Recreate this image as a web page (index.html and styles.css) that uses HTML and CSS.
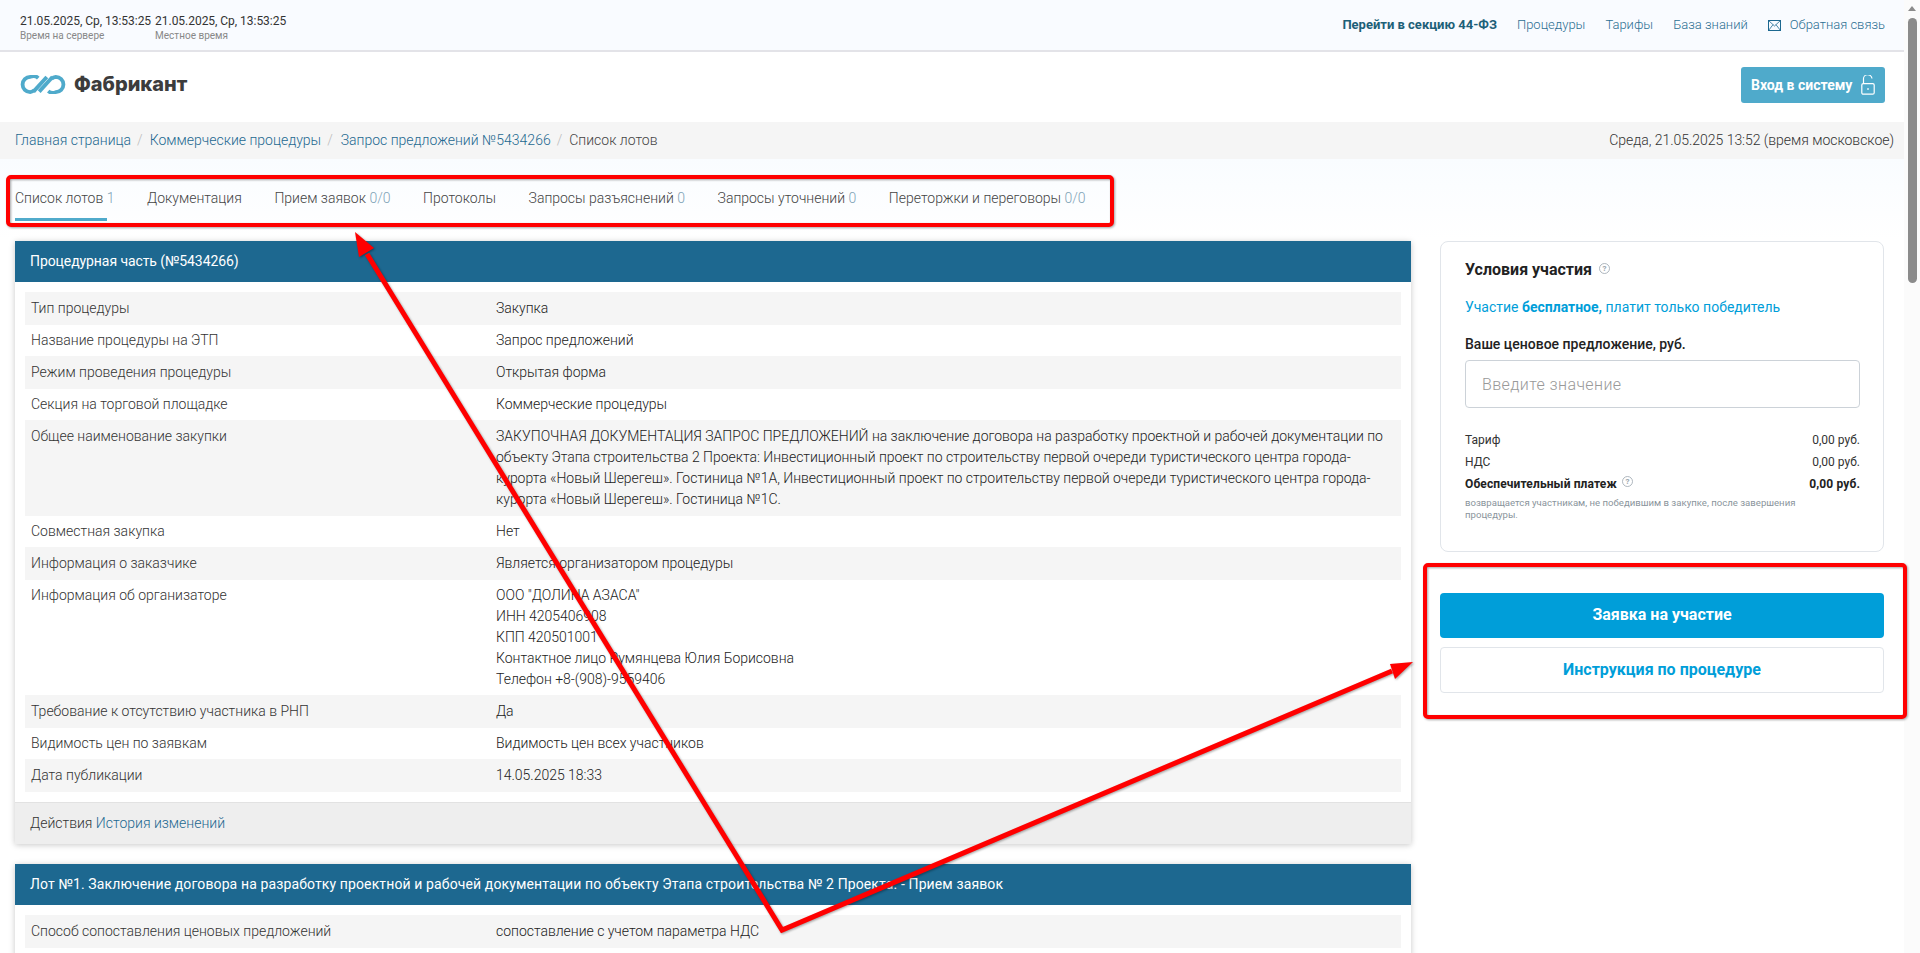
FILE: index.html
```html
<!DOCTYPE html>
<html lang="ru">
<head>
<meta charset="utf-8">
<title>Список лотов</title>
<link rel="stylesheet" href="styles.css">
</head>
<body>
<div class="viewport">
  <div class="page">
    <div class="topbar">
      <div class="clocks">
        <div class="clock"><div class="clock-time">21.05.2025, Ср, 13:53:25</div><div class="clock-label">Время на сервере</div></div>
        <div class="clock"><div class="clock-time">21.05.2025, Ср, 13:53:25</div><div class="clock-label">Местное время</div></div>
      </div>
      <nav class="topnav">
        <a class="topnav-strong">Перейти в секцию 44-ФЗ</a>
        <a>Процедуры</a>
        <a>Тарифы</a>
        <a>База знаний</a>
        <a class="feedback">
          <svg class="mail" width="13" height="11" viewBox="0 0 13 11"><rect x="0.5" y="0.5" width="12" height="10" fill="none" stroke="#1d6890"/><path d="M0.5 0.5 6.5 6 12.5 0.5M0.5 10.5 5 4.7M12.5 10.5 8 4.7" fill="none" stroke="#1d6890" stroke-width="0.8"/></svg>
          Обратная связь
        </a>
      </nav>
    </div>
    <header class="header">
      <div class="logo">
        <svg width="46" height="19" viewBox="0 0 46 20" fill="none" stroke="#4faacb" stroke-width="4">
          <path d="M18 3.2A7.6 7.6 0 0 0 9.5 2 A7.9 7.9 0 1 0 9.5 18 A8 8 0 0 0 14 16"/>
          <path d="M13 17.5 27 2.2"/>
          <path d="M19 17.5 33 2.2"/>
          <path d="M28.5 17A7.6 7.6 0 0 0 36.5 18 A7.9 7.9 0 1 0 36.5 2 A8 8 0 0 0 32 4"/>
        </svg>
        <span class="logo-text">Фабрикант</span>
      </div>
      <a class="login">Вход в систему
        <svg width="14" height="20" viewBox="0 0 14 20" fill="none" stroke="#fff" stroke-width="1.2"><rect x="0.8" y="8.6" width="12.4" height="10.6" rx="1.5"/><path d="M2.5 8.5V4.5A4.2 4.2 0 0 1 11 3.5"/><path d="M7 13v2"/></svg>
      </a>
    </header>
    <div class="crumbs">
      <div class="crumb-list">
        <a>Главная страница</a><span class="sep">/</span>
        <a>Коммерческие процедуры</a><span class="sep sep-wide">/</span>
        <a>Запрос предложений №5434266</a><span class="sep">/</span>
        <span class="crumb-current">Список лотов</span>
      </div>
      <div class="crumb-date">Среда, 21.05.2025 13:52 (время московское)</div>
    </div>
    <div class="tabs">
      <a class="tab active"><span class="tab-name">Список лотов</span> <span class="count">1</span></a>
      <a class="tab"><span class="tab-name">Документация</span></a>
      <a class="tab"><span class="tab-name">Прием заявок</span> <span class="count">0/0</span></a>
      <a class="tab"><span class="tab-name">Протоколы</span></a>
      <a class="tab"><span class="tab-name">Запросы разъяснений</span> <span class="count">0</span></a>
      <a class="tab"><span class="tab-name">Запросы уточнений</span> <span class="count">0</span></a>
      <a class="tab"><span class="tab-name">Переторжки и переговоры</span> <span class="count">0/0</span></a>
    </div>
    <div class="content">
      <div class="left">
        <section class="panel">
          <h2 class="panel-head">Процедурная часть (№5434266)</h2>
          <div class="rows">
            <div class="row"><div class="cell-l">Тип процедуры</div><div class="cell-v">Закупка</div></div>
            <div class="row"><div class="cell-l">Название процедуры на ЭТП</div><div class="cell-v">Запрос предложений</div></div>
            <div class="row"><div class="cell-l">Режим проведения процедуры</div><div class="cell-v">Открытая форма</div></div>
            <div class="row"><div class="cell-l">Секция на торговой площадке</div><div class="cell-v">Коммерческие процедуры</div></div>
            <div class="row"><div class="cell-l">Общее наименование закупки</div><div class="cell-v">ЗАКУПОЧНАЯ ДОКУМЕНТАЦИЯ ЗАПРОС ПРЕДЛОЖЕНИЙ на заключение договора на разработку проектной и рабочей документации по объекту Этапа строительства 2 Проекта: Инвестиционный проект по строительству первой очереди туристического центра города-курорта «Новый Шерегеш». Гостиница №1А, Инвестиционный проект по строительству первой очереди туристического центра города-курорта «Новый Шерегеш». Гостиница №1С.</div></div>
            <div class="row"><div class="cell-l">Совместная закупка</div><div class="cell-v">Нет</div></div>
            <div class="row"><div class="cell-l">Информация о заказчике</div><div class="cell-v">Является организатором процедуры</div></div>
            <div class="row"><div class="cell-l">Информация об организаторе</div><div class="cell-v">ООО "ДОЛИНА АЗАСА"<br>ИНН 4205406908<br>КПП 420501001<br>Контактное лицо Румянцева Юлия Борисовна<br>Телефон +8-(908)-9559406</div></div>
            <div class="row"><div class="cell-l">Требование к отсутствию участника в РНП</div><div class="cell-v">Да</div></div>
            <div class="row"><div class="cell-l">Видимость цен по заявкам</div><div class="cell-v">Видимость цен всех участников</div></div>
            <div class="row"><div class="cell-l">Дата публикации</div><div class="cell-v">14.05.2025 18:33</div></div>
          </div>
          <div class="panel-foot">Действия <a>История изменений</a></div>
        </section>
        <section class="panel">
          <h2 class="panel-head panel-head-lot">Лот №1. Заключение договора на разработку проектной и рабочей документации по объекту Этапа строительства № 2 Проекта. - Прием заявок</h2>
          <div class="rows">
            <div class="row"><div class="cell-l">Способ сопоставления ценовых предложений</div><div class="cell-v">сопоставление с учетом параметра НДС</div></div>
          </div>
        </section>
      </div>
      <aside class="right">
        <div class="card">
          <div class="card-title">Условия участия
            <svg class="help" width="11" height="11" viewBox="0 0 11 11"><circle cx="5.5" cy="5.5" r="5" fill="none" stroke="#9aa5ad" stroke-width="0.8"/><text x="5.5" y="8.2" text-anchor="middle" class="help-mark">?</text></svg>
          </div>
          <div class="free">Участие <b>бесплатное,</b> платит только победитель</div>
          <div class="offer-label">Ваше ценовое предложение, руб.</div>
          <div class="input">Введите значение</div>
          <div class="fee"><span>Тариф</span><span>0,00 руб.</span></div>
          <div class="fee"><span>НДС</span><span>0,00 руб.</span></div>
          <div class="fee fee-bold"><span>Обеспечительный платеж
            <svg class="help" width="11" height="11" viewBox="0 0 11 11"><circle cx="5.5" cy="5.5" r="5" fill="none" stroke="#9aa5ad" stroke-width="0.8"/><text x="5.5" y="8.2" text-anchor="middle" class="help-mark">?</text></svg>
          </span><span>0,00 руб.</span></div>
          <div class="note">возвращается участникам, не победившим в закупке, после завершения процедуры.</div>
        </div>
        <a class="btn btn-primary">Заявка на участие</a>
        <a class="btn btn-outline">Инструкция по процедуре</a>
      </aside>
    </div>
  </div>
  <div class="scrollbar"><span class="scroll-up"></span><span class="scroll-thumb"></span></div>
  <svg class="marks" width="1920" height="953" viewBox="0 0 1920 953" fill="none">
    <g class="mark-group">
      <rect x="8" y="177" width="1104" height="48" rx="3" stroke="#ff0000" stroke-width="4"/>
      <rect x="1425" y="565" width="480" height="152" rx="3" stroke="#ff0000" stroke-width="4"/>
      <path d="M367 254 782 930 1392 671" stroke="#ff0000" stroke-width="5" stroke-linejoin="miter"/>
      <path d="M355 232 374 248 359 257Z" fill="#ff0000"/>
      <path d="M1413 662 1390 664 1395 679Z" fill="#ff0000"/>
    </g>
  </svg>
</div>
</body>
</html>
```

FILE: styles.css
```css
* { box-sizing: border-box; }
html, body { margin: 0; padding: 0; height: 953px; overflow: hidden; }
body { font-family: Roboto, "Liberation Sans", sans-serif; font-size: 14px; line-height: 21px; color: #333; background: #fff; }
a { color: inherit; text-decoration: none; }

.viewport { position: relative; display: flex; width: 1920px; height: 953px; overflow: hidden; }
.page { width: 1904px; flex: none; background: linear-gradient(#f9fcff 159px, #fff 240px); }

.topbar { height: 52px; display: flex; justify-content: space-between; padding: 14px 19px 0 20px; background: #f9fbff; border-bottom: 2px solid #e3e3e8; }
.clocks { display: flex; gap: 4px; }
.clock-time { font-size: 12px; line-height: 14px; color: #333; letter-spacing: -0.03px; }
.clock-label { font-size: 10px; line-height: 14px; margin-top: 1px; color: #888; }
.topnav { display: flex; align-items: flex-start; gap: 20px; font-size: 13px; line-height: 20px; color: #2c6f92; font-weight: 300; padding-top: 1px; }
.topnav-strong { font-weight: 700; color: #1d6078; }
.feedback { display: flex; align-items: center; gap: 9px; height: 20px; }

.header { height: 70px; display: flex; justify-content: space-between; align-items: center; padding: 0 19px 0 20px; background: #fff; }
.logo { display: flex; align-items: center; gap: 8px; margin-top: -6px; }
.logo-text { font-family: Inter, Roboto, sans-serif; font-weight: 800; font-size: 20px; line-height: 24px; color: #3c3c3c; }
.login { width: 144px; height: 36px; margin-top: -4px; display: flex; align-items: center; justify-content: space-between; padding: 0 10px; border-radius: 3px; background: #4faacb; color: #fff; font-size: 14px; font-weight: 700; }

.crumbs { height: 37px; display: flex; justify-content: space-between; align-items: center; padding: 0 10px 0 15px; background: #f5f5f5; }
.crumb-list { display: flex; color: #1d6890; font-weight: 300; }
.sep { color: #bbb; padding: 0 7px 0 6px; }
.sep-wide { padding-right: 8px; }
.crumb-current { color: #444; }
.crumb-date { color: #333; font-weight: 300; letter-spacing: -0.03px; }

.tabs { height: 82px; display: flex; gap: 32.6px; padding: 0 0 0 15px; }
.tab { position: relative; height: 62px; padding-top: 29px; line-height: 20px; color: #444; font-weight: 300; }
.count { color: #7fa3b7; }
.tab.active .tab-name { display: inline-block; height: 33px; padding-right: 4px; border-bottom: 3px solid #4faacb; }
.tab.active .count { margin-left: -4px; }

.content { display: flex; padding: 0 20px 0 15px; }
.left { width: 1396px; flex: none; }
.right { width: 444px; flex: none; margin-left: 29px; }

.panel { background: #fff; box-shadow: 0 1px 6px rgba(0,0,0,.22); margin-bottom: 20px; }
.panel-head { margin: 0; height: 41px; padding: 0 15px; font-size: 14px; font-weight: 400; line-height: 41px; color: #fff; background: #1d6890; white-space: nowrap; letter-spacing: -0.08px; }
.panel-head-lot { letter-spacing: 0.12px; }
.rows { padding: 10px; }
.row { display: grid; grid-template-columns: 465px 1fr; padding: 5px 5px; font-weight: 300; color: #222; }
.row:nth-child(odd) { background: #f5f5f5; padding: 6px 5px; }
.cell-l { padding-left: 1px; color: #333; }
.cell-v { padding-left: 1px; letter-spacing: -0.02px; }
.panel-foot { height: 42px; padding: 0 15px; line-height: 41px; background: #eee; border-top: 1px solid #e2e2e2; font-weight: 300; }
.panel-foot a { color: #1d6890; }

.card { height: 311px; padding: 18px 23px 0 24px; border: 1px solid #e1e5ea; border-radius: 8px; background: #fff; }
.card-title { font-size: 16px; line-height: 20px; font-weight: 700; color: #222; }
.help { margin-left: 3px; vertical-align: 1px; }
.help-mark { font-size: 8px; fill: #9aa5ad; }
.free { margin-top: 17px; color: #009ed9; line-height: 21px; }
.offer-label { margin-top: 16px; font-weight: 500; color: #222; line-height: 21px; }
.input { height: 48px; margin-top: 5px; padding: 0 16px; border: 1px solid #ccd2d8; border-radius: 4px; font-size: 16px; letter-spacing: 0.4px; line-height: 47px; color: #999; font-weight: 300; }
.fee { display: flex; justify-content: space-between; margin-top: 4px; font-size: 12px; line-height: 18px; font-weight: 400; color: #333; }
.input + .fee { margin-top: 23px; }
.fee-bold { font-weight: 700; color: #222; letter-spacing: 0.12px; }
.fee-bold .help { margin-left: 2px; }
.note { margin-top: 4px; width: 360px; font-size: 9.6px; line-height: 12px; color: #8a949c; }

.btn { display: block; text-align: center; font-size: 16px; font-weight: 700; border-radius: 4px; }
.btn-primary { height: 45px; margin-top: 41px; line-height: 44px; background: #009ed9; color: #fff; }
.btn-outline { height: 46px; margin-top: 9px; line-height: 44px; border: 1px solid #e1e5ea; color: #009ed9; background: #fff; }

.scrollbar { position: relative; width: 16px; height: 953px; background: #fbfbfb; }
.scroll-up { position: absolute; left: 4px; top: 6px; width: 0; height: 0; border: 4px solid transparent; border-top: 0; border-bottom: 5px solid #8b8b8b; }
.scroll-thumb { position: absolute; left: 4px; top: 18px; width: 9px; height: 265px; border-radius: 5px; background: #8b8b8b; }

.marks { position: absolute; left: 0; top: 0; pointer-events: none; }
.mark-group { filter: drop-shadow(1px 1px 1px rgba(0,0,0,.35)); }
```
